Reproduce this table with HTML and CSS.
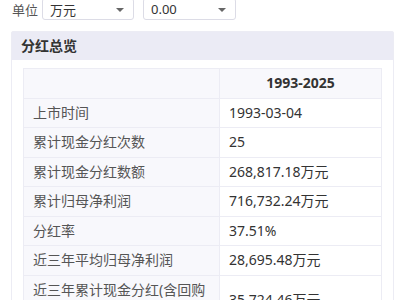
FILE: index.html
```html
<!DOCTYPE html>
<html>
<head>
<meta charset="utf-8">
<link rel="stylesheet" href="styles.css">
</head>
<body>
<div class="toolbar">
  <span class="unit-label">单位</span>
  <div class="select s1"><span>万元</span><i class="caret"></i></div>
  <div class="select s2"><span>0.00</span><i class="caret"></i></div>
</div>
<div class="card">
  <div class="card-head">分红总览</div>
  <div class="card-body">
    <table class="tbl">
      <thead>
        <tr><th class="lab"></th><th class="val">1993-2025</th></tr>
      </thead>
      <tbody>
        <tr><td class="lab">上市时间</td><td class="val">1993-03-04</td></tr>
        <tr><td class="lab">累计现金分红次数</td><td class="val">25</td></tr>
        <tr><td class="lab">累计现金分红数额</td><td class="val">268,817.18万元</td></tr>
        <tr><td class="lab">累计归母净利润</td><td class="val">716,732.24万元</td></tr>
        <tr><td class="lab">分红率</td><td class="val">37.51%</td></tr>
        <tr><td class="lab">近三年平均归母净利润</td><td class="val">28,695.48万元</td></tr>
        <tr><td class="lab">近三年累计现金分红(含回购金额)</td><td class="val">35,724.46万元</td></tr>
      </tbody>
    </table>
  </div>
</div>
</body>
</html>
```
FILE: styles.css
```css
html, body {
  margin: 0;
  padding: 0;
  background: #fff;
  font-family: "Noto Sans", "Noto Sans CJK SC", sans-serif;
  color: #333;
  overflow: hidden;
}
.toolbar {
  display: flex;
  align-items: center;
  margin-top: -2px;
  padding-left: 12px;
  height: 22px;
  font-size: 13px;
}
.unit-label {
  color: #555;
  margin-right: 4px;
}
.select {
  box-sizing: border-box;
  height: 22px;
  border: 1px solid #dcdce6;
  border-radius: 3px;
  display: flex;
  align-items: center;
  justify-content: space-between;
  padding: 0 9px 0 7px;
  color: #333;
}
.s1 { width: 92px; }
.s2 { width: 93px; margin-left: 9px; }
.caret {
  width: 0;
  height: 0;
  border-left: 4px solid transparent;
  border-right: 4px solid transparent;
  border-top: 4px solid #666;
  margin-top: 1px;
}
.card {
  margin: 11px 6px 0 11px;
  border: 1px solid #ececf4;
  border-radius: 2px;
}
.card-head {
  background: #ebebf5;
  height: 28px;
  line-height: 28px;
  padding-left: 9px;
  font-weight: bold;
  font-size: 14px;
  color: #333;
}
.card-body {
  padding: 8px 11px 20px 11px;
}
.tbl {
  width: 100%;
  border-collapse: collapse;
  font-size: 14px;
}
.tbl th, .tbl td {
  border: 1px solid #ececf4;
  padding: 4px 9px 4px 9px;
  line-height: 20.5px;
  text-align: left;
  font-weight: normal;
  vertical-align: middle;
}
.tbl .lab {
  width: 177px;
  background: #f8f8fc;
  color: #555;
}
.tbl .val {
  background: #fff;
  color: #333;
}
.tbl th.val {
  background: #f8f8fc;
  text-align: center;
  font-weight: bold;
}
```
